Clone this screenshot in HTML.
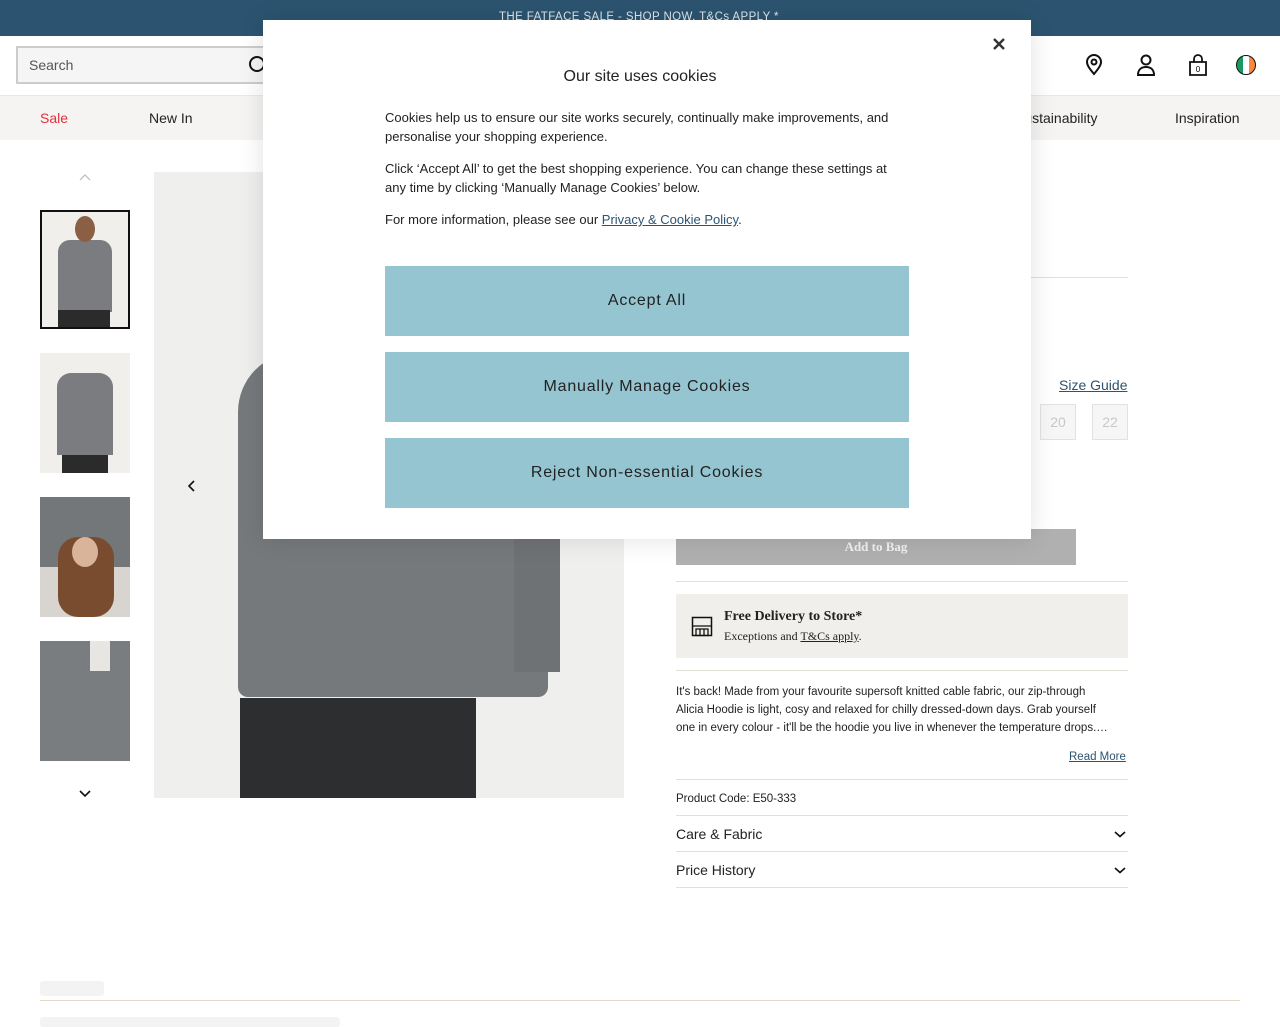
<!DOCTYPE html>
<html><head><meta charset="utf-8">
<style>
*{box-sizing:border-box;margin:0;padding:0}
body{width:1280px;height:1024px;overflow:hidden;background:#fff;font-family:"Liberation Sans",Arial,sans-serif;color:#222;position:relative}
.abs{position:absolute}
.line{position:absolute;height:1px;background:#e2dfd6}
.nav{font-size:14px;color:#222}
</style></head><body>
<div class="abs" style="left:0;top:0;width:1280px;height:36px;background:#2c5470"></div>
<div class="abs" style="left:499px;top:11px;font-size:11.5px;color:#dfe7ee;letter-spacing:.4px">THE FATFACE SALE - SHOP NOW. T&amp;Cs APPLY *</div>
<div class="abs" style="left:16px;top:46px;width:260px;height:38px;border:2px solid #ccc;border-right:none;background:#f5f5f5"></div>
<div class="abs" style="left:29px;top:57px;font-size:14px;color:#555">Search</div>
<div class="abs" style="left:249px;top:56px;width:16px;height:16px;border:2px solid #111;border-radius:50%"></div>
<svg class="abs" style="left:1084px;top:54px" width="20" height="22" viewBox="0 0 20 22"><path d="M10 20C5 14 3 11 3 8a7 7 0 0 1 14 0c0 3-2 6-7 12z" fill="none" stroke="#111" stroke-width="2"/><circle cx="10" cy="8" r="2.5" fill="none" stroke="#111" stroke-width="2"/></svg>
<svg class="abs" style="left:1136px;top:54px" width="20" height="22" viewBox="0 0 20 22"><circle cx="10" cy="6" r="4.5" fill="none" stroke="#111" stroke-width="2"/><path d="M2 21c0-5 3-8 8-8s8 3 8 8z" fill="none" stroke="#111" stroke-width="2"/></svg>
<svg class="abs" style="left:1188px;top:54px" width="20" height="22" viewBox="0 0 20 22"><path d="M2 8h16v13H2z" fill="none" stroke="#111" stroke-width="1.8"/><path d="M6 8V5a4 4 0 0 1 8 0v3" fill="none" stroke="#111" stroke-width="1.8"/><text x="10" y="18" font-size="8" text-anchor="middle" font-family="Liberation Sans">0</text></svg>
<div class="abs" style="left:1236px;top:55px;width:20px;height:20px;border-radius:50%;border:1.5px solid #111;background:linear-gradient(90deg,#169b62 33%,#fff 33%,#fff 66%,#ff883e 66%)"></div>
<div class="abs" style="left:0;top:95px;width:1280px;height:45px;background:#f5f4f2;border-top:1px solid #e8e8e8"></div>
<div class="abs nav" style="left:40px;top:110px;color:#e0313f">Sale</div>
<div class="abs nav" style="left:149px;top:110px">New In</div>
<div class="abs nav" style="left:1015px;top:110px">Sustainability</div>
<div class="abs nav" style="left:1175px;top:110px">Inspiration</div>
<svg class="abs" style="left:78px;top:172px" width="14" height="10"><path d="M2 8l5-5 5 5" fill="none" stroke="#bbb" stroke-width="1.2"/></svg>
<div class="abs" style="left:40px;top:210px;width:90px;height:119px;border:2px solid #111;background:#f0efec;overflow:hidden"><div class="abs" style="left:16px;top:28px;width:54px;height:72px;background:#7a7c7f;border-radius:12px 12px 0 0"></div><div class="abs" style="left:16px;top:98px;width:52px;height:18px;background:#2b2b2b"></div><div class="abs" style="left:33px;top:4px;width:20px;height:26px;background:#8a5f44;border-radius:50%"></div></div>
<div class="abs" style="left:40px;top:353px;width:90px;height:120px;background:#f0efec"><div class="abs" style="left:17px;top:20px;width:56px;height:82px;background:#7a7c7f;border-radius:14px 14px 0 0"></div><div class="abs" style="left:22px;top:102px;width:46px;height:18px;background:#2b2b2b"></div></div>
<div class="abs" style="left:40px;top:497px;width:90px;height:120px;background:#d8d5d0;overflow:hidden"><div class="abs" style="left:0;top:0;width:90px;height:70px;background:#74777a"></div><div class="abs" style="left:18px;top:40px;width:56px;height:80px;background:#7a4c2f;border-radius:20px"></div><div class="abs" style="left:32px;top:40px;width:26px;height:30px;background:#d9b49a;border-radius:50%"></div></div>
<div class="abs" style="left:40px;top:641px;width:90px;height:120px;background:#7a7d80"><div class="abs" style="left:50px;top:0;width:20px;height:30px;background:#e8e6e2"></div></div>
<svg class="abs" style="left:78px;top:788px" width="14" height="10"><path d="M2 3l5 5 5-5" fill="none" stroke="#111" stroke-width="1.6"/></svg>
<div class="abs" style="left:154px;top:172px;width:470px;height:626px;background:#efefed;overflow:hidden">
 <div class="abs" style="left:84px;top:180px;width:310px;height:345px;background:#76797c;border-radius:60px 60px 10px 10px"></div>
 <div class="abs" style="left:86px;top:526px;width:236px;height:100px;background:#2d2e30"></div>
 <div class="abs" style="left:360px;top:300px;width:46px;height:200px;background:#6f7275"></div>
</div>
<svg class="abs" style="left:186px;top:479px" width="10" height="14"><path d="M8 2L3 7l5 5" fill="none" stroke="#111" stroke-width="1.6"/></svg>
<div class="line" style="left:1031px;top:277px;width:97px"></div>
<div class="abs" style="left:1059px;top:377px;font-size:14px;color:#2c5470;text-decoration:underline">Size Guide</div>
<div class="abs" style="left:1040px;top:404px;width:36px;height:36px;border:1px solid #e2e2e2;background:#f6f6f6;color:#c8c8c8;font-size:14px;text-align:center;line-height:34px">20</div>
<div class="abs" style="left:1092px;top:404px;width:36px;height:36px;border:1px solid #e2e2e2;background:#f6f6f6;color:#c8c8c8;font-size:14px;text-align:center;line-height:34px">22</div>
<div class="abs" style="left:676px;top:529px;width:400px;height:36px;background:#b0b0b0;color:#f2f2f2;font-family:'Liberation Serif',serif;font-weight:bold;font-size:13px;text-align:center;line-height:36px">Add to Bag</div>
<div class="line" style="left:676px;top:581px;width:452px"></div>
<div class="abs" style="left:676px;top:594px;width:452px;height:64px;background:#f0efeb"></div>
<svg class="abs" style="left:691px;top:616px" width="22" height="22" viewBox="0 0 22 22"><rect x="1.5" y="1.5" width="19" height="18" fill="none" stroke="#111" stroke-width="1.5"/><path d="M1.5 10h19M5 13h12v6.5H5zM9 13v6.5M13 13v6.5" fill="none" stroke="#111" stroke-width="1.3"/></svg>
<div class="abs" style="left:724px;top:609px;font-family:'Liberation Serif',serif;font-weight:bold;font-size:14px;color:#222">Free Delivery to Store*</div>
<div class="abs" style="left:724px;top:629px;font-family:'Liberation Serif',serif;font-size:12px;color:#222">Exceptions and <u>T&amp;Cs apply</u>.</div>
<div class="line" style="left:676px;top:670px;width:452px"></div>
<div class="abs" style="left:676px;top:683px;font-size:11.5px;line-height:18px;color:#222;white-space:nowrap">It's back! Made from your favourite supersoft knitted cable fabric, our zip-through<br>Alicia Hoodie is light, cosy and relaxed for chilly dressed-down days. Grab yourself<br>one in every colour - it'll be the hoodie you live in whenever the temperature drops.…</div>
<div class="abs" style="left:1069px;top:751px;font-size:11.5px;color:#2c5470;text-decoration:underline">Read More</div>
<div class="line" style="left:676px;top:779px;width:452px"></div>
<div class="abs" style="left:676px;top:793px;font-size:11.5px">Product Code: E50-333</div>
<div class="line" style="left:676px;top:815px;width:452px"></div>
<div class="abs" style="left:676px;top:826px;font-size:14px">Care &amp; Fabric</div>
<svg class="abs" style="left:1113px;top:829px" width="14" height="10"><path d="M2 3l5 4.5 5-4.5" fill="none" stroke="#111" stroke-width="1.6"/></svg>
<div class="line" style="left:676px;top:851px;width:452px"></div>
<div class="abs" style="left:676px;top:862px;font-size:14px">Price History</div>
<svg class="abs" style="left:1113px;top:865px" width="14" height="10"><path d="M2 3l5 4.5 5-4.5" fill="none" stroke="#111" stroke-width="1.6"/></svg>
<div class="line" style="left:676px;top:887px;width:452px"></div>
<div class="abs" style="left:40px;top:981px;width:64px;height:15px;background:#f3f3f3;border-radius:3px"></div>
<div class="abs" style="left:40px;top:1000px;width:1200px;height:1px;background:#e4d9cb"></div>
<div class="abs" style="left:40px;top:1017px;width:300px;height:10px;background:#f3f3f3;border-radius:3px"></div>
<div class="abs" style="left:263px;top:20px;width:768px;height:519px;background:#fff;box-shadow:0 0 24px rgba(0,0,0,.12)">
 <svg class="abs" style="left:729px;top:17px" width="14" height="14"><path d="M2 2l10 10M12 2L2 12" stroke="#333" stroke-width="2.4"/></svg>
 <div class="abs" style="left:0;top:48px;width:754px;text-align:center;font-size:16px;color:#222">Our site uses cookies</div>
 <div class="abs" style="left:122px;top:88px;width:520px;font-size:13px;line-height:19px;color:#222">
  <p style="margin-bottom:13px">Cookies help us to ensure our site works securely, continually make improvements, and personalise your shopping experience.</p>
  <p style="margin-bottom:13px">Click ‘Accept All’ to get the best shopping experience. You can change these settings at any time by clicking ‘Manually Manage Cookies’ below.</p>
  <p>For more information, please see our <span style="color:#2c5470;text-decoration:underline">Privacy &amp; Cookie Policy</span>.</p>
 </div>
 <div class="abs" style="left:122px;top:246px;width:524px;height:70px;background:#96c5d2;font-size:16px;letter-spacing:.8px;text-align:center;line-height:70px;color:#222">Accept All</div>
 <div class="abs" style="left:122px;top:332px;width:524px;height:70px;background:#96c5d2;font-size:16px;letter-spacing:.8px;text-align:center;line-height:70px;color:#222">Manually Manage Cookies</div>
 <div class="abs" style="left:122px;top:418px;width:524px;height:70px;background:#96c5d2;font-size:16px;letter-spacing:.8px;text-align:center;line-height:70px;color:#222">Reject Non-essential Cookies</div>
</div>
</body></html>
